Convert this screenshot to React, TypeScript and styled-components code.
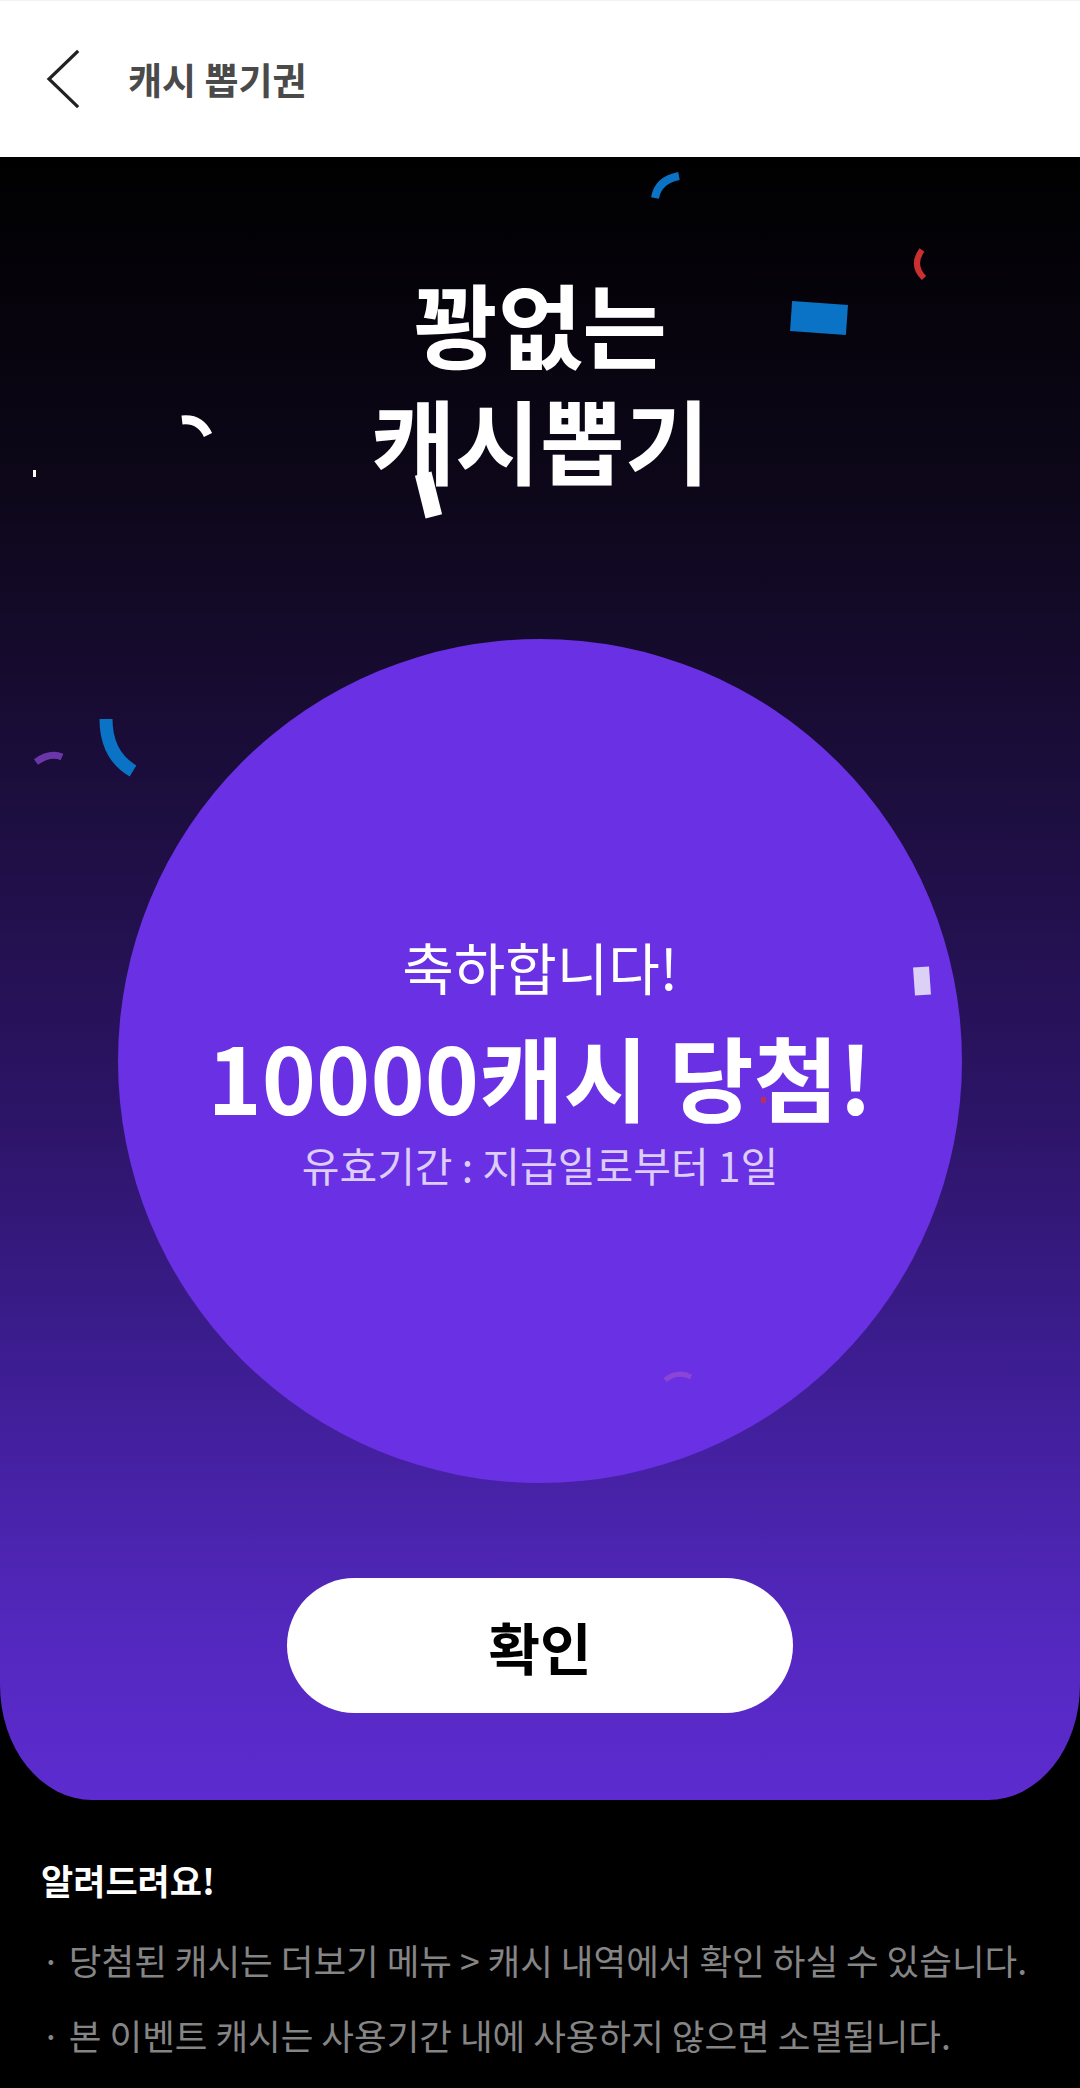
import React from 'react';
import styled, { createGlobalStyle } from 'styled-components';

const GlobalStyle = createGlobalStyle`
  html, body {
    margin: 0;
    padding: 0;
    background: #000;
  }
  body {
    font-family: "Noto Sans CJK KR", "Noto Sans", sans-serif;
    -webkit-font-smoothing: antialiased;
  }
  * {
    box-sizing: border-box;
  }
`;

const Page = styled.div`
  width: 1080px;
  min-height: 2088px;
  background: #000;
`;

const Header = styled.header`
  height: 157px;
  background: #fff;
  border-top: 1px solid #f2f2f2;
  display: flex;
  align-items: center;
  padding-left: 46px;
  gap: 48px;
`;

const BackButton = styled.button`
  width: 34px;
  height: 60px;
  border: 0;
  padding: 0;
  background: none;
  display: flex;
  align-items: center;
  justify-content: center;
`;

const HeaderTitle = styled.h1`
  margin: 0;
  font-size: 37px;
  font-weight: 700;
  color: #4a4a4a;
`;

const Hero = styled.section`
  position: relative;
  overflow: hidden;
  height: 1643px;
  border-radius: 0 0 92px 92px / 0 0 115px 115px;
  background: linear-gradient(
    180deg,
    #000000 0%,
    #0d0719 20%,
    #1d0e40 40%,
    #2c1466 58%,
    #3f1e96 75%,
    #5328bf 90%,
    #5d2bcf 100%
  );
  display: flex;
  flex-direction: column;
  align-items: center;
  padding-top: 107px;
`;

const Title = styled.h2`
  margin: 0;
  font-size: 92px;
  line-height: 116px;
  font-weight: 700;
  color: #fff;
  text-align: center;
`;

const Circle = styled.div`
  margin-top: 143px;
  width: 844px;
  height: 844px;
  border-radius: 50%;
  background: #6a30e3;
  display: flex;
  flex-direction: column;
  align-items: center;
  justify-content: center;
  color: #fff;
`;

const Congrats = styled.div`
  font-size: 56px;
  line-height: 70px;
  font-weight: 400;
  margin-bottom: 20px;
`;

const Prize = styled.div`
  font-size: 92px;
  line-height: 108px;
  font-weight: 700;
`;

const Validity = styled.div`
  margin-top: 7px;
  font-size: 41px;
  line-height: 56px;
  color: #dccdfb;
`;

const ConfirmButton = styled.button`
  margin-top: 95px;
  width: 506px;
  height: 135px;
  border: 0;
  border-radius: 68px;
  background: #fff;
  color: #000;
  font-family: inherit;
  font-size: 56px;
  font-weight: 700;
`;

// confetti drawing laid over the hero panel
const ConfettiLayer = styled.svg`
  position: absolute;
  left: 0;
  top: 0;
  width: 1080px;
  height: 1643px;
  pointer-events: none;
`;

const Notice = styled.section`
  padding: 56px 41px 0;
  color: #fff;
`;

const NoticeTitle = styled.h3`
  margin: 0 0 18px;
  font-size: 35px;
  line-height: 48px;
  font-weight: 700;
`;

const NoticeItem = styled.p`
  margin: 0;
  font-size: 35.5px;
  line-height: 75px;
  color: #858585;
  white-space: nowrap;
`;

const ChevronLeft = () => (
  <svg width="34" height="60" viewBox="0 0 34 60" fill="none">
    <path d="M31 3 L3 30 L31 57" stroke="#222" strokeWidth="3.2" strokeLinecap="square" />
  </svg>
);

const arcs = [
  { d: 'M655 41 Q658 23 679 19', color: '#0b73c6', w: 8 },
  { d: 'M922 93 Q911 108 924 121', color: '#c9302f', w: 6 },
  { d: 'M182 263 Q200 261 208 278', color: '#ffffff', w: 9 },
  { d: 'M106 562 Q106 598 133 614', color: '#0b73c6', w: 13 },
  { d: 'M36 605 Q50 595 62 600', color: '#6b36aa', w: 7 },
  { d: 'M665 1223 Q678 1213 691 1220', color: '#8a45d6', w: 5 },
];

const rects = [
  { x: 791, y: 146, w: 56, h: 30, color: '#0b73c6', r: 4 },
  { x: 420, y: 316, w: 17, h: 44, color: '#ffffff', r: -14 },
  { x: 33, y: 313, w: 3, h: 7, color: '#ffffff', r: 0 },
  { x: 914, y: 810, w: 16, h: 28, color: '#ddd0f6', r: -4 },
  { x: 761, y: 940, w: 5, h: 6, color: '#b8305a', r: 0 },
];

const App = () => {
  return (
    <Page>
      <GlobalStyle />
      <Header>
        <BackButton aria-label="뒤로">
          <ChevronLeft />
        </BackButton>
        <HeaderTitle>캐시 뽑기권</HeaderTitle>
      </Header>

      <Hero>
        <Title>
          꽝없는
          <br />
          캐시뽑기
        </Title>
        <Circle>
          <Congrats>축하합니다!</Congrats>
          <Prize>10000캐시 당첨!</Prize>
          <Validity>유효기간 : 지급일로부터 1일</Validity>
        </Circle>
        <ConfirmButton>확인</ConfirmButton>

        <ConfettiLayer viewBox="0 0 1080 1643">
          {arcs.map((a, i) => (
            <path key={i} d={a.d} stroke={a.color} strokeWidth={a.w} fill="none" />
          ))}
          {rects.map((r, i) => (
            <rect
              key={i}
              x={r.x}
              y={r.y}
              width={r.w}
              height={r.h}
              fill={r.color}
              transform={`rotate(${r.r} ${r.x + r.w / 2} ${r.y + r.h / 2})`}
            />
          ))}
        </ConfettiLayer>
      </Hero>

      <Notice>
        <NoticeTitle>알려드려요!</NoticeTitle>
        <NoticeItem>· 당첨된 캐시는 더보기 메뉴 &gt; 캐시 내역에서 확인 하실 수 있습니다.</NoticeItem>
        <NoticeItem>· 본 이벤트 캐시는 사용기간 내에 사용하지 않으면 소멸됩니다.</NoticeItem>
      </Notice>
    </Page>
  );
};

export default App;
